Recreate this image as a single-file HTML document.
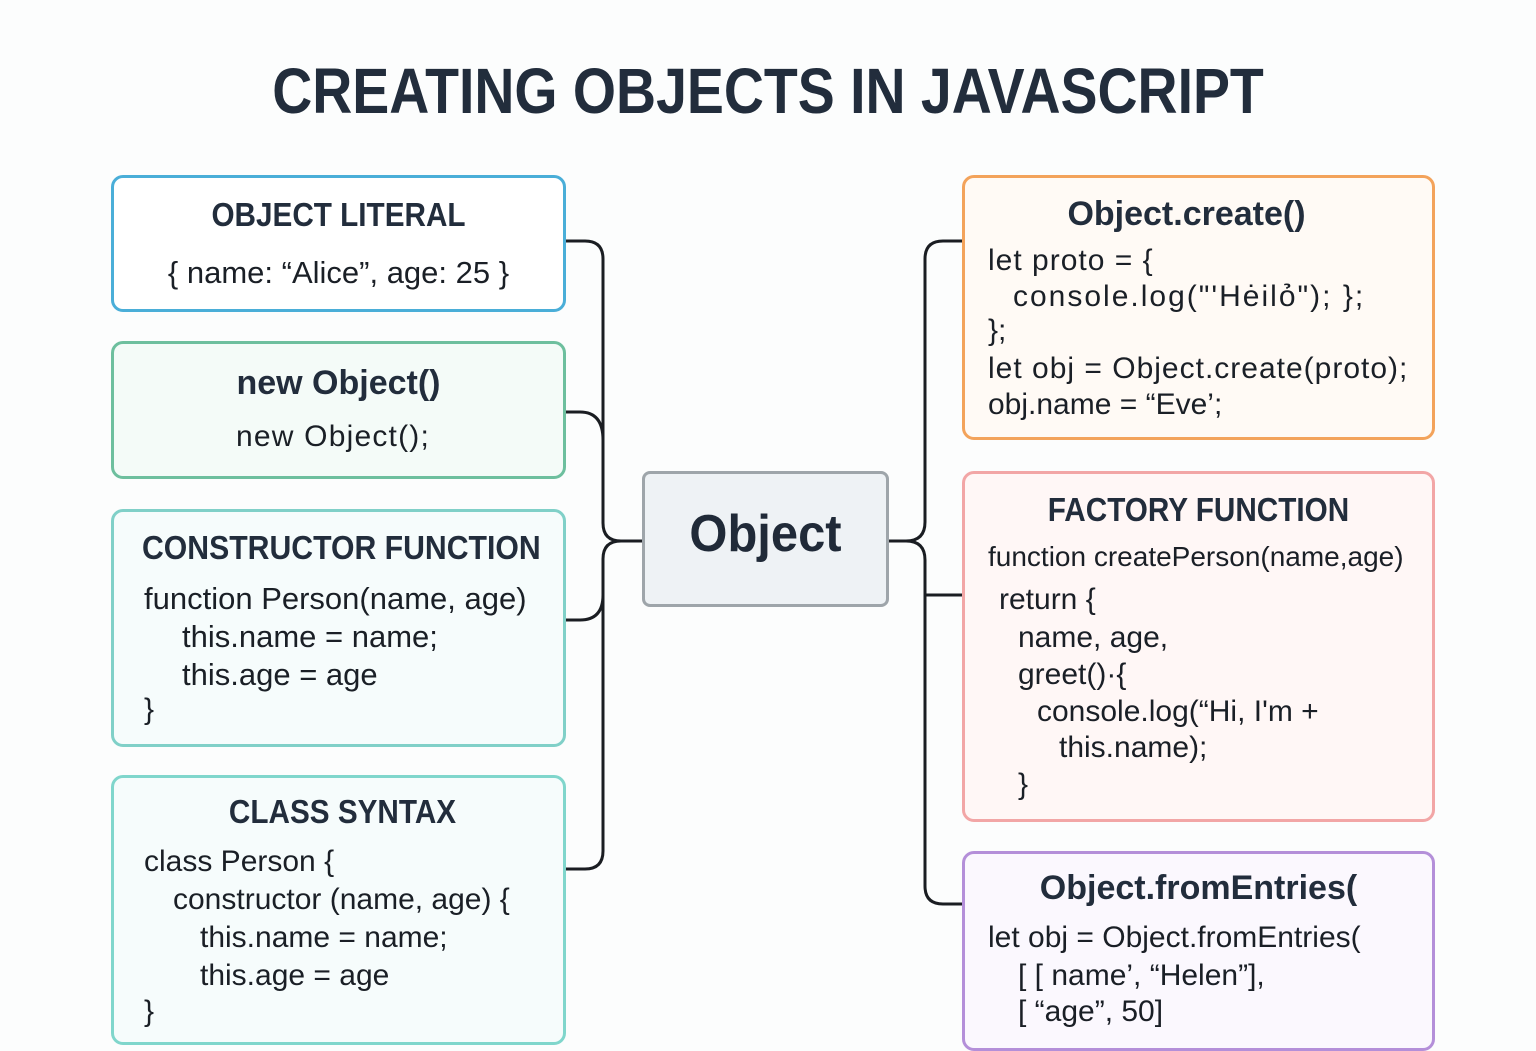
<!DOCTYPE html>
<html><head><meta charset="utf-8"><style>
*{margin:0;padding:0;box-sizing:border-box}
body{width:1536px;height:1024px;background:#fcfdfd;position:relative;overflow:hidden;font-family:"Liberation Sans",sans-serif;color:#1c2430}
.t{position:absolute;white-space:nowrap;line-height:40px;height:40px}
.h{font-weight:bold;color:#222d3c;transform:scaleX(0.9);transform-origin:50% 50%}
.c{font-size:30px;color:#1a1f26}
.box{position:absolute;border:3px solid;border-radius:12px}
</style></head><body>
<div class="t h" style="left:0;width:1536px;text-align:center;top:60px;height:62px;line-height:62px;font-size:64px;transform:scaleX(0.866)">CREATING OBJECTS IN JAVASCRIPT</div>

<svg style="position:absolute;left:0;top:0" width="1536" height="1024">
<g fill="none" stroke="#1a1d22" stroke-width="3">
<path d="M566 241 H585 Q603 241 603 259 V523 Q603 541 621 541 H642"/>
<path d="M566 412 H580 Q603 412 603 440"/>
<path d="M566 620 H580 Q603 620 603 595 V559 Q603 541 621 541"/>
<path d="M566 869 H585 Q603 869 603 851 V560"/>
<path d="M889 541 H906 Q925 541 925 522 V259 Q925 241 943 241 H962"/>
<path d="M906 541 Q925 541 925 560 V886 Q925 904 943 904 H962"/>
<path d="M925 595 H962"/>
</g></svg>

<div class="box" style="left:111px;top:175px;width:455px;height:137px;border-color:#4aaed8;background:#fff"></div>
<div class="t h" style="left:111px;width:455px;text-align:center;top:195px;font-size:33px">OBJECT LITERAL</div>
<div class="t c" style="left:111px;width:455px;text-align:center;top:253px;font-size:31px">{ name: “Alice”, age: 25 }</div>

<div class="box" style="left:111px;top:341px;width:455px;height:138px;border-color:#6dbf9e;background:#f4fbf8"></div>
<div class="t h" style="left:111px;width:455px;text-align:center;top:363px;font-size:34px;transform:none">new Object()</div>
<div class="t c" style="left:236px;top:417px;letter-spacing:1.2px">new Object();</div>

<div class="box" style="left:111px;top:509px;width:455px;height:238px;border-color:#80d0c8;background:#f6fcfc"></div>
<div class="t h" style="left:142px;top:528px;font-size:33px;transform-origin:0 50%;transform:scaleX(0.915)">CONSTRUCTOR FUNCTION</div>
<div class="t c" style="left:144px;top:579px;font-size:31px">function Person(name, age)</div>
<div class="t c" style="left:182px;top:617px;font-size:31px">this.name = name;</div>
<div class="t c" style="left:182px;top:655px;font-size:31px">this.age = age</div>
<div class="t c" style="left:144px;top:690px">}</div>

<div class="box" style="left:111px;top:775px;width:455px;height:270px;border-color:#80d6cc;background:#f6fcfc"></div>
<div class="t h" style="left:115px;width:455px;text-align:center;top:792px;font-size:33px">CLASS SYNTAX</div>
<div class="t c" style="left:144px;top:842px">class Person {</div>
<div class="t c" style="left:173px;top:880px">constructor (name, age) {</div>
<div class="t c" style="left:200px;top:918px">this.name = name;</div>
<div class="t c" style="left:200px;top:956px">this.age = age</div>
<div class="t c" style="left:144px;top:992px">}</div>

<div class="box" style="left:642px;top:471px;width:247px;height:136px;border-color:#9ea5aa;background:#eef2f5;border-radius:8px"></div>
<div class="t" style="left:642px;width:247px;text-align:center;top:504px;height:60px;line-height:60px;font-size:52px;font-weight:bold;color:#202a38;transform:scaleX(0.94)">Object</div>

<div class="box" style="left:962px;top:175px;width:473px;height:265px;border-color:#f3a35b;background:#fffaf5"></div>
<div class="t h" style="left:950px;width:473px;text-align:center;top:194px;font-size:34px;transform:none">Object.create()</div>
<div class="t c" style="left:988px;top:241px;letter-spacing:1px">let proto = {</div>
<div class="t c" style="left:1013px;top:277px;letter-spacing:2px">console.log("'Hėilỏ"); };</div>
<div class="t c" style="left:988px;top:311px">};</div>
<div class="t c" style="left:988px;top:349px;letter-spacing:1px">let obj = Object.create(proto);</div>
<div class="t c" style="left:988px;top:385px">obj.name = “Eve’;</div>

<div class="box" style="left:962px;top:471px;width:473px;height:351px;border-color:#f2a6a6;background:#fff7f6"></div>
<div class="t h" style="left:962px;width:473px;text-align:center;top:490px;font-size:33px">FACTORY FUNCTION</div>
<div class="t c" style="left:988px;top:537px;font-size:28px">function createPerson(name,age)</div>
<div class="t c" style="left:999px;top:580px">return {</div>
<div class="t c" style="left:1018px;top:618px">name, age,</div>
<div class="t c" style="left:1018px;top:655px">greet()·{</div>
<div class="t c" style="left:1037px;top:692px">console.log(“Hi, I'm +</div>
<div class="t c" style="left:1059px;top:728px">this.name);</div>
<div class="t c" style="left:1018px;top:765px">}</div>

<div class="box" style="left:962px;top:851px;width:473px;height:200px;border-color:#b48fd9;background:#fbf8fe"></div>
<div class="t h" style="left:962px;width:473px;text-align:center;top:868px;font-size:34px;transform:none">Object.fromEntries(</div>
<div class="t c" style="left:988px;top:918px">let obj = Object.fromEntries(</div>
<div class="t c" style="left:1018px;top:956px">[ [ name’, “Helen”],</div>
<div class="t c" style="left:1018px;top:992px">[ “age”, 50]</div>
</body></html>
